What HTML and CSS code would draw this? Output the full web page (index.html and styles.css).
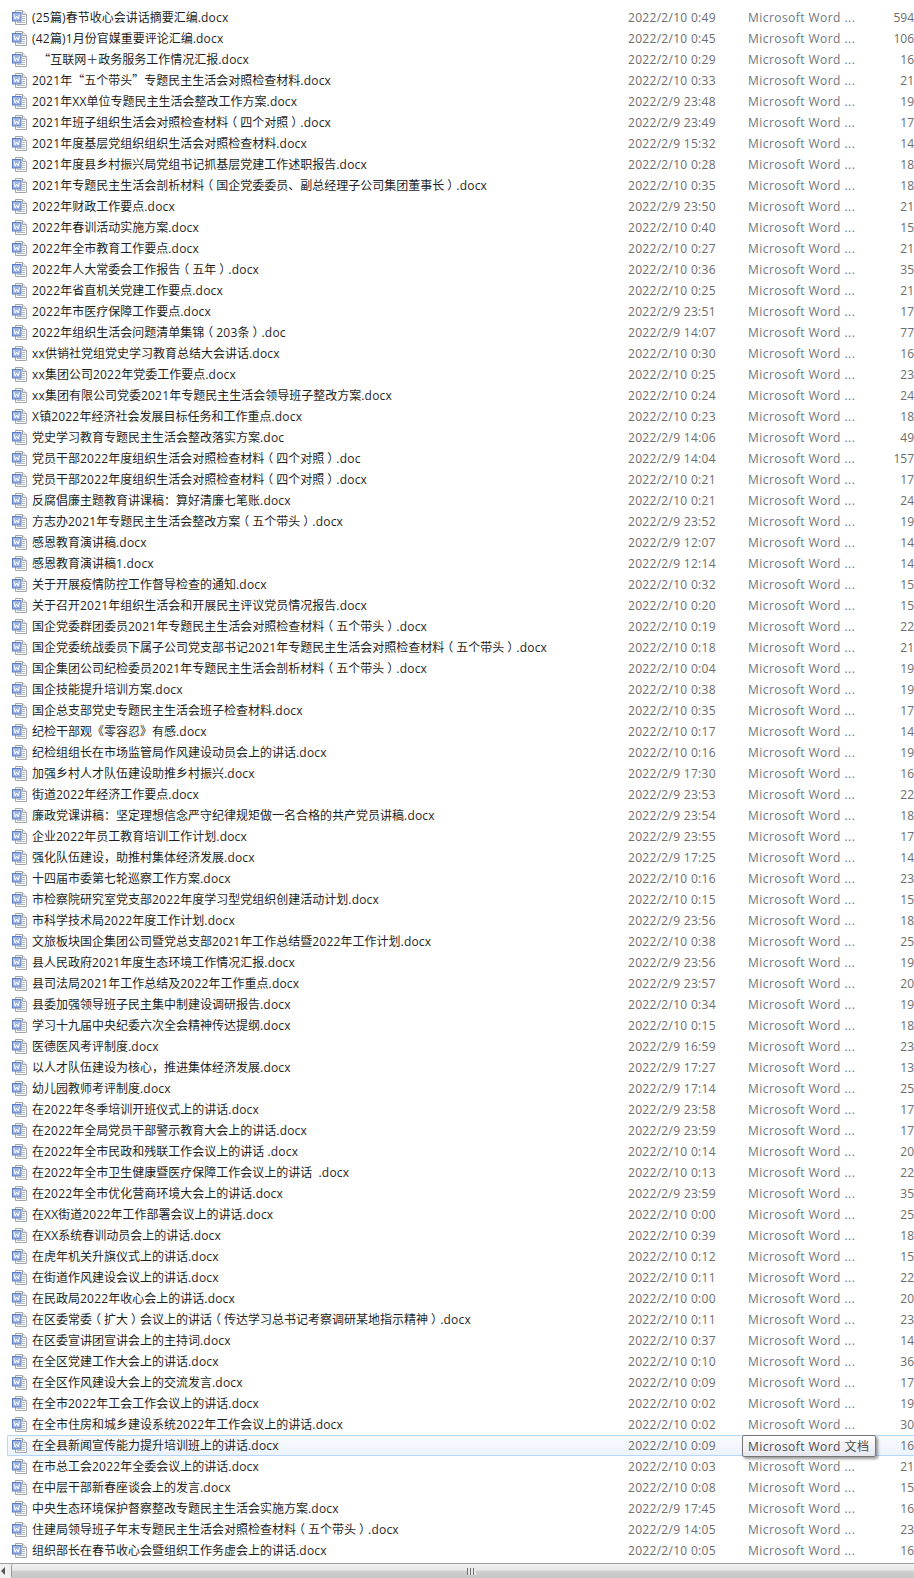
FILE: index.html
```html
<!DOCTYPE html>
<html lang="zh-CN">

<head>
    <meta charset="UTF-8">
    <title>files</title>
    <link rel="stylesheet" href="styles.css">
</head>

<body>
    <svg class="defs" width="0" height="0">
        <symbol id="doc" viewBox="0 0 15 15">
            <path d="M3.5 .5H10.5L14.5 4.5V14.5H3.5Z" fill="#fdfdfe" stroke="#a3a7ad" />
            <path d="M10.5 .5V4.5H14.5" fill="#e8eaee" stroke="#a3a7ad" />
            <path d="M10 6.5H13M10 8.5H13M10 10.5H13M5 12.5H13" stroke="#b4b9c0" />
            <rect x=".5" y="2.5" width="8.5" height="8.5" fill="#9db4e2" stroke="#5a7cc0" />
            <path d="M2 4.5L3.2 9L4.7 6L6.2 9L7.5 4.5" fill="none" stroke="#fff" />
        </symbol>
    </svg>

    <div class="list" id="list"></div>

    <div class="tip">Microsoft Word 文档</div>

    <div class="hscroll">
        <div class="arrow"></div>
        <div class="thumb">
            <div class="grip"></div>
        </div>
    </div>

    <script src="list.js"></script>
</body>

</html>
```

FILE: styles.css
```css
* {
    box-sizing: border-box;
}

html,
body {
    height: 100%;
}

body {
    margin: 0;
    overflow: hidden;
    background: #ffffff;
    color: #1f1f1f;
    font-family: "Open Sans", "Noto Sans CJK SC", sans-serif;
    font-size: 12px;
    display: flex;
    flex-direction: column;
    position: relative;
}

.defs {
    position: absolute;
}

.list {
    flex: 1;
    padding: 7px 0 0 7px;
    overflow: hidden;
}

.row {
    display: grid;
    grid-template-columns: 620px 120px 1fr 40px;
    align-items: center;
    height: 21px;
    padding-bottom: 1px;
    border: 1px solid transparent;
    border-right: 0;
    white-space: nowrap;
}

.row.hover {
    border-color: #b8d6fb;
    border-radius: 2px 0 0 2px;
    background: linear-gradient(#fafbfd, #ebf3fd);
}

.name {
    display: flex;
    align-items: center;
    gap: 5px;
    padding-left: 4px;
}

.name-text {
    white-space: pre;
}

.icon {
    width: 15px;
    height: 15px;
    flex: none;
}

.latin {
    letter-spacing: 0.2px;
}

/* full width punctuation sits differently per CJK family */
.quote {
    font-family: "Noto Sans CJK SC", sans-serif;
}

.punct {
    font-family: "Noto Sans CJK TC", sans-serif;
}

.paren-open {
    margin: 0 3px 0 -3px;
}

.paren-close {
    margin: 0 -3px 0 3px;
}

.date,
.size {
    color: #6d6d6d;
}

.date {
    letter-spacing: 0.3px;
}

.type {
    color: #6d7680;
    letter-spacing: 0.45px;
}

.size {
    text-align: right;
}

.tip {
    position: absolute;
    left: 742px;
    top: 1435px;
    width: 134px;
    height: 22px;
    padding: 0 0 1px 5px;
    display: flex;
    align-items: center;
    color: #4c4c4c;
    letter-spacing: 0.45px;
    background: linear-gradient(#ffffff, #e6e6ef);
    border: 1px solid #767676;
    border-radius: 2px;
    box-shadow: 2px 2px 3px rgba(0, 0, 0, 0.4);
}

.hscroll {
    height: 15px;
    flex: none;
    display: flex;
    background: #f0f0f0;
    border-top: 1px solid #a0a0a0;
}

.arrow {
    width: 11px;
    position: relative;
}

.arrow::before {
    content: "";
    position: absolute;
    left: 1px;
    top: 3px;
    border: 4px solid transparent;
    border-left: 0;
    border-right-color: #555;
}

.thumb {
    flex: 1;
    display: flex;
    align-items: center;
    justify-content: center;
    padding-left: 17px;
    border-left: 1px solid #979797;
    border-radius: 2px 0 0 2px;
    background: linear-gradient(#f2f2f2, #e6e6e6 45%, #d0d0d0 50%, #c6c6c6);
}

.grip {
    width: 9px;
    height: 7px;
    background: repeating-linear-gradient(90deg, #6f6f6f 0 1px, #e8e8e8 1px 3px);
}
```

FILE: list.js
```js
const rows = [
    ['(25篇)春节收心会讲话摘要汇编.docx', '2022/2/10 0:49', '594'],
    ['(42篇)1月份官媒重要评论汇编.docx', '2022/2/10 0:45', '106'],
    ['  “互联网＋政务服务工作情况汇报.docx', '2022/2/10 0:29', '16'],
    ['2021年“五个带头”专题民主生活会对照检查材料.docx', '2022/2/10 0:33', '21'],
    ['2021年XX单位专题民主生活会整改工作方案.docx', '2022/2/9 23:48', '19'],
    ['2021年班子组织生活会对照检查材料（四个对照）.docx', '2022/2/9 23:49', '17'],
    ['2021年度基层党组织组织生活会对照检查材料.docx', '2022/2/9 15:32', '14'],
    ['2021年度县乡村振兴局党组书记抓基层党建工作述职报告.docx', '2022/2/10 0:28', '18'],
    ['2021年专题民主生活会剖析材料（国企党委委员、副总经理子公司集团董事长）.docx', '2022/2/10 0:35', '18'],
    ['2022年财政工作要点.docx', '2022/2/9 23:50', '21'],
    ['2022年春训活动实施方案.docx', '2022/2/10 0:40', '15'],
    ['2022年全市教育工作要点.docx', '2022/2/10 0:27', '21'],
    ['2022年人大常委会工作报告（五年）.docx', '2022/2/10 0:36', '35'],
    ['2022年省直机关党建工作要点.docx', '2022/2/10 0:25', '21'],
    ['2022年市医疗保障工作要点.docx', '2022/2/9 23:51', '17'],
    ['2022年组织生活会问题清单集锦（203条）.doc', '2022/2/9 14:07', '77'],
    ['xx供销社党组党史学习教育总结大会讲话.docx', '2022/2/10 0:30', '16'],
    ['xx集团公司2022年党委工作要点.docx', '2022/2/10 0:25', '23'],
    ['xx集团有限公司党委2021年专题民主生活会领导班子整改方案.docx', '2022/2/10 0:24', '24'],
    ['X镇2022年经济社会发展目标任务和工作重点.docx', '2022/2/10 0:23', '18'],
    ['党史学习教育专题民主生活会整改落实方案.doc', '2022/2/9 14:06', '49'],
    ['党员干部2022年度组织生活会对照检查材料（四个对照）.doc', '2022/2/9 14:04', '157'],
    ['党员干部2022年度组织生活会对照检查材料（四个对照）.docx', '2022/2/10 0:21', '17'],
    ['反腐倡廉主题教育讲课稿：算好清廉七笔账.docx', '2022/2/10 0:21', '24'],
    ['方志办2021年专题民主生活会整改方案（五个带头）.docx', '2022/2/9 23:52', '19'],
    ['感恩教育演讲稿.docx', '2022/2/9 12:07', '14'],
    ['感恩教育演讲稿1.docx', '2022/2/9 12:14', '14'],
    ['关于开展疫情防控工作督导检查的通知.docx', '2022/2/10 0:32', '15'],
    ['关于召开2021年组织生活会和开展民主评议党员情况报告.docx', '2022/2/10 0:20', '15'],
    ['国企党委群团委员2021年专题民主生活会对照检查材料（五个带头）.docx', '2022/2/10 0:19', '22'],
    ['国企党委统战委员下属子公司党支部书记2021年专题民主生活会对照检查材料（五个带头）.docx', '2022/2/10 0:18', '21'],
    ['国企集团公司纪检委员2021年专题民主生活会剖析材料（五个带头）.docx', '2022/2/10 0:04', '19'],
    ['国企技能提升培训方案.docx', '2022/2/10 0:38', '19'],
    ['国企总支部党史专题民主生活会班子检查材料.docx', '2022/2/10 0:35', '17'],
    ['纪检干部观《零容忍》有感.docx', '2022/2/10 0:17', '14'],
    ['纪检组组长在市场监管局作风建设动员会上的讲话.docx', '2022/2/10 0:16', '19'],
    ['加强乡村人才队伍建设助推乡村振兴.docx', '2022/2/9 17:30', '16'],
    ['街道2022年经济工作要点.docx', '2022/2/9 23:53', '22'],
    ['廉政党课讲稿：坚定理想信念严守纪律规矩做一名合格的共产党员讲稿.docx', '2022/2/9 23:54', '18'],
    ['企业2022年员工教育培训工作计划.docx', '2022/2/9 23:55', '17'],
    ['强化队伍建设，助推村集体经济发展.docx', '2022/2/9 17:25', '14'],
    ['十四届市委第七轮巡察工作方案.docx', '2022/2/10 0:16', '23'],
    ['市检察院研究室党支部2022年度学习型党组织创建活动计划.docx', '2022/2/10 0:15', '15'],
    ['市科学技术局2022年度工作计划.docx', '2022/2/9 23:56', '18'],
    ['文旅板块国企集团公司暨党总支部2021年工作总结暨2022年工作计划.docx', '2022/2/10 0:38', '25'],
    ['县人民政府2021年度生态环境工作情况汇报.docx', '2022/2/9 23:56', '19'],
    ['县司法局2021年工作总结及2022年工作重点.docx', '2022/2/9 23:57', '20'],
    ['县委加强领导班子民主集中制建设调研报告.docx', '2022/2/10 0:34', '19'],
    ['学习十九届中央纪委六次全会精神传达提纲.docx', '2022/2/10 0:15', '18'],
    ['医德医风考评制度.docx', '2022/2/9 16:59', '23'],
    ['以人才队伍建设为核心，推进集体经济发展.docx', '2022/2/9 17:27', '13'],
    ['幼儿园教师考评制度.docx', '2022/2/9 17:14', '25'],
    ['在2022年冬季培训开班仪式上的讲话.docx', '2022/2/9 23:58', '17'],
    ['在2022年全局党员干部警示教育大会上的讲话.docx', '2022/2/9 23:59', '17'],
    ['在2022年全市民政和残联工作会议上的讲话 .docx', '2022/2/10 0:14', '20'],
    ['在2022年全市卫生健康暨医疗保障工作会议上的讲话  .docx', '2022/2/10 0:13', '22'],
    ['在2022年全市优化营商环境大会上的讲话.docx', '2022/2/9 23:59', '35'],
    ['在XX街道2022年工作部署会议上的讲话.docx', '2022/2/10 0:00', '25'],
    ['在XX系统春训动员会上的讲话.docx', '2022/2/10 0:39', '18'],
    ['在虎年机关升旗仪式上的讲话.docx', '2022/2/10 0:12', '15'],
    ['在街道作风建设会议上的讲话.docx', '2022/2/10 0:11', '22'],
    ['在民政局2022年收心会上的讲话.docx', '2022/2/10 0:00', '20'],
    ['在区委常委（扩大）会议上的讲话（传达学习总书记考察调研某地指示精神）.docx', '2022/2/10 0:11', '23'],
    ['在区委宣讲团宣讲会上的主持词.docx', '2022/2/10 0:37', '14'],
    ['在全区党建工作大会上的讲话.docx', '2022/2/10 0:10', '36'],
    ['在全区作风建设大会上的交流发言.docx', '2022/2/10 0:09', '17'],
    ['在全市2022年工会工作会议上的讲话.docx', '2022/2/10 0:02', '19'],
    ['在全市住房和城乡建设系统2022年工作会议上的讲话.docx', '2022/2/10 0:02', '30'],
    ['在全县新闻宣传能力提升培训班上的讲话.docx', '2022/2/10 0:09', '16', 'hover'],
    ['在市总工会2022年全委会议上的讲话.docx', '2022/2/10 0:03', '21'],
    ['在中层干部新春座谈会上的发言.docx', '2022/2/10 0:08', '15'],
    ['中央生态环境保护督察整改专题民主生活会实施方案.docx', '2022/2/9 17:45', '16'],
    ['住建局领导班子年末专题民主生活会对照检查材料（五个带头）.docx', '2022/2/9 14:05', '23'],
    ['组织部长在春节收心会暨组织工作务虚会上的讲话.docx', '2022/2/10 0:05', '16'],
];

const list = document.getElementById('list');

const classes = {
    '“': 'quote',
    '”': 'quote',
    '（': 'punct paren-open',
    '）': 'punct paren-close',
    '：': 'punct',
    '，': 'punct',
};

function markText(name) {
    return name.replace(/[\x21-\x7e]+|[“”（）：，]/g, m => `<span class="${classes[m] || 'latin'}">${m}</span>`);
}

rows.forEach(([name, date, size, state]) => {
    const row = document.createElement('div');
    row.className = state ? `row ${state}` : 'row';
    // the tooltip covers the type cell of the hovered row
    const type = state ? '' : 'Microsoft Word ...';
    row.innerHTML = `
        <div class="name"><svg class="icon"><use href="#doc"></use></svg><span class="name-text">${markText(name)}</span></div>
        <div class="date">${date}</div>
        <div class="type">${type}</div>
        <div class="size">${size}</div>`;
    list.appendChild(row);
});
```
